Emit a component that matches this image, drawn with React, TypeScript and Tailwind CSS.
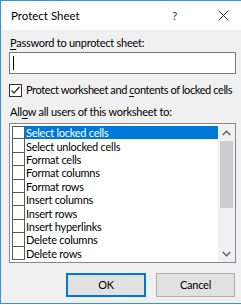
import React from "react";

const items = [
  "Select locked cells",
  "Select unlocked cells",
  "Format cells",
  "Format columns",
  "Format rows",
  "Insert columns",
  "Insert rows",
  "Insert hyperlinks",
  "Delete columns",
  "Delete rows",
];

const font = { fontFamily: 'Lato, "Noto Sans", sans-serif' };

export default function App() {
  return (
    <div className="w-[241px] h-[305px] bg-white text-[11px] leading-[14px] tracking-[-0.25px] text-black whitespace-nowrap overflow-hidden" style={font}>
      <div className="h-[304px] border-t border-l border-b border-[#3c8fdc] flex flex-col">
        {/* title bar */}
        <div className="h-[29px] bg-white flex items-center pl-[10px] shrink-0">
          <span className="text-[11.5px] tracking-normal pt-[1px]">Protect Sheet</span>
          <span className="ml-auto mr-[41px] text-[#333] text-[12px]">?</span>
          <svg width="11" height="11" viewBox="0 0 11 11" className="mr-[12px]">
            <path d="M0.5 0.5L10.5 10.5M10.5 0.5L0.5 10.5" stroke="#333" strokeWidth="1" />
          </svg>
        </div>

        {/* body */}
        <div className="flex-1 bg-[#f0f0f0] pl-[8px] pr-[5px] flex flex-col">
          <div className="mt-[6px] pl-[1px]">
            <span className="underline underline-offset-2">P</span>assword to unprotect sheet:
          </div>
          <div className="mt-[2px] h-[22px] bg-white border border-[#7a7a7a] flex items-center pl-[3px] shrink-0">
            <div className="w-px h-[14px] bg-black" />
          </div>

          <div className="mt-[9px] flex items-center gap-[4px]">
            <div className="w-[13px] h-[13px] border border-[#333] bg-white flex items-center justify-center shrink-0">
              <svg width="11" height="11" viewBox="0 0 11 11">
                <path d="M1.5 5.5L4 8L9.5 2" fill="none" stroke="#222" strokeWidth="1.2" />
              </svg>
            </div>
            <span className="tracking-[-0.4px]">
              Protect worksheet and <span className="underline underline-offset-2">c</span>ontents of locked cells
            </span>
          </div>

          <div className="mt-[8px] pl-[1px]">
            All<span className="underline underline-offset-2">o</span>w all users of this worksheet to:
          </div>

          <div className="mt-[4px] h-[140px] bg-white border border-[#828790] flex shrink-0">
            <div className="flex-1 pt-[2px] pl-[2px] overflow-hidden">
              {items.map((item, i) => (
                <div key={item} className="h-[13.4px] flex items-stretch">
                  <div
                    className={`w-[13px] border-l border-r border-b border-[#5a5a5a] bg-white ${i === 0 ? "border-t" : ""}`}
                  />
                  <div
                    className={`flex-1 flex items-center pl-[1px] leading-[13px] ${i === 0 ? "bg-[#0078d7] text-white" : ""}`}
                  >
                    {item}
                  </div>
                </div>
              ))}
            </div>
            <div className="w-[17px] bg-[#f0f0f0] flex flex-col items-center">
              <div className="h-[17px] w-full flex items-center justify-center">
                <svg width="9" height="6" viewBox="0 0 9 6">
                  <path d="M0.8 5L4.5 1.3L8.2 5" fill="none" stroke="#606060" strokeWidth="1.5" />
                </svg>
              </div>
              <div className="w-[13px] h-[67px] bg-[#cdcdcd]" />
              <div className="flex-1" />
              <div className="h-[17px] w-full flex items-center justify-center">
                <svg width="9" height="6" viewBox="0 0 9 6">
                  <path d="M0.8 1L4.5 4.7L8.2 1" fill="none" stroke="#606060" strokeWidth="1.5" />
                </svg>
              </div>
            </div>
          </div>

          <div className="mt-[10px] flex justify-end gap-[10px] pr-[1px]">
            <button className="w-[80px] h-[24px] bg-[#e1e1e1] border border-[#0078d7] outline outline-1 outline-[#0078d7] -outline-offset-2">
              OK
            </button>
            <button className="w-[79px] h-[24px] bg-[#e1e1e1] border border-[#adadad]">Cancel</button>
          </div>
        </div>
      </div>
    </div>
  );
}
